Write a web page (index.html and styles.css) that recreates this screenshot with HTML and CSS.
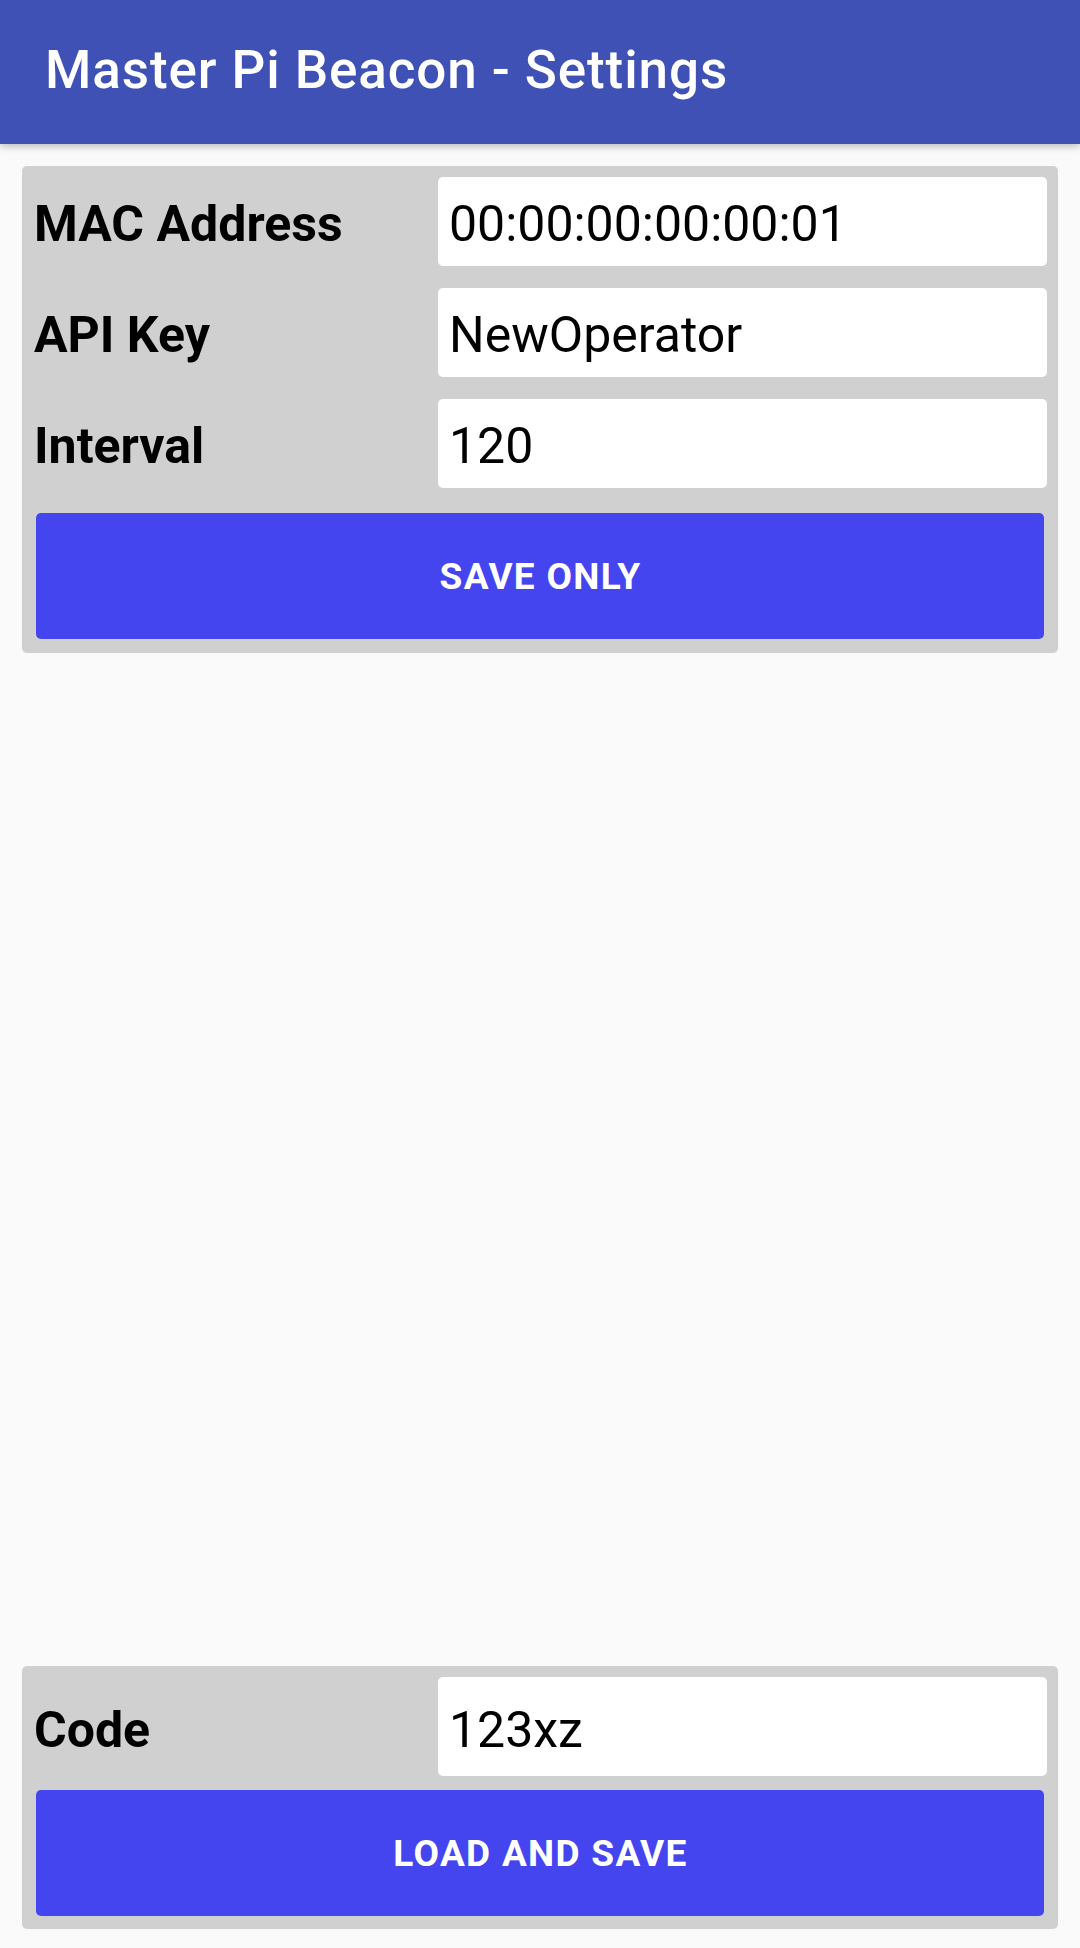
FILE: index.html
```html
<!DOCTYPE html>
<html lang="en">
<head>
<meta charset="utf-8">
<title>Master Pi Beacon - Settings</title>
<link rel="stylesheet" href="styles.css">
</head>
<body>
<div class="app">
  <header class="toolbar">
    <h1 class="title">Master Pi Beacon - Settings</h1>
  </header>
  <main class="content">
    <section class="card card-top">
      <div class="row">
        <div class="label">MAC Address</div>
        <div class="field">00:00:00:00:00:01</div>
      </div>
      <div class="row">
        <div class="label">API Key</div>
        <div class="field">NewOperator</div>
      </div>
      <div class="row">
        <div class="label">Interval</div>
        <div class="field">120</div>
      </div>
      <button class="btn btn-save">SAVE ONLY</button>
    </section>
    <div class="spacer"></div>
    <section class="card card-bottom">
      <div class="row row-tall">
        <div class="label">Code</div>
        <div class="field">123xz</div>
      </div>
      <button class="btn btn-load">LOAD AND SAVE</button>
    </section>
  </main>
</div>
</body>
</html>
```

FILE: styles.css
```css
* {
  box-sizing: border-box;
}

html, body {
  margin: 0;
  padding: 0;
}

body {
  width: 1080px;
  height: 1948px;
  background: #fafafa;
  font-family: Roboto, "Liberation Sans", sans-serif;
  overflow: hidden;
}

.app {
  display: flex;
  flex-direction: column;
  height: 1948px;
}

.toolbar {
  position: relative;
  height: 144px;
  background: #3f51b5;
  display: flex;
  align-items: center;
  padding-left: 45px;
  box-shadow: 0 2px 8px rgba(0, 0, 0, 0.28);
  z-index: 1;
  flex: none;
}

.title {
  margin: 0;
  color: #ffffff;
  font-size: 53px;
  font-weight: 500;
  letter-spacing: 0.9px;
  line-height: 1;
  padding-bottom: 4px;
}

.content {
  flex: 1;
  display: flex;
  flex-direction: column;
  padding: 22px 22px 19px 22px;
}

.spacer {
  flex: 1;
}

.card {
  background: #d0d0d0;
  border-radius: 5px;
  display: flex;
  flex-direction: column;
}

.card-top {
  padding: 11px 11px 14px 12px;
  gap: 22px;
}

.card-bottom {
  padding: 11px 11px 13px 12px;
  gap: 14px;
}

.row {
  display: flex;
  height: 89px;
}

.row-tall {
  height: 99px;
}

.label {
  width: 404px;
  flex: none;
  display: flex;
  align-items: center;
  padding-top: 5px;
  font-size: 50px;
  font-weight: 700;
  color: #000000;
}

.row-tall .label {
  padding-top: 7px;
}

.field {
  flex: 1;
  background: #ffffff;
  border-radius: 5px;
  display: flex;
  align-items: center;
  padding-left: 11px;
  padding-top: 5px;
  font-size: 50px;
  font-weight: 400;
  color: #000000;
}

.row-tall .field {
  padding-top: 7px;
}

.btn {
  display: block;
  height: 126px;
  margin: 0 3px 0 2px;
  border: none;
  border-radius: 5px;
  background: #4545f0;
  color: #ffffff;
  font-family: Roboto, "Liberation Sans", sans-serif;
  font-size: 37px;
  font-weight: 700;
  letter-spacing: 1.3px;
  padding: 0 0 0 1px;
}

.btn-save {
  margin-top: 3px;
}
```
